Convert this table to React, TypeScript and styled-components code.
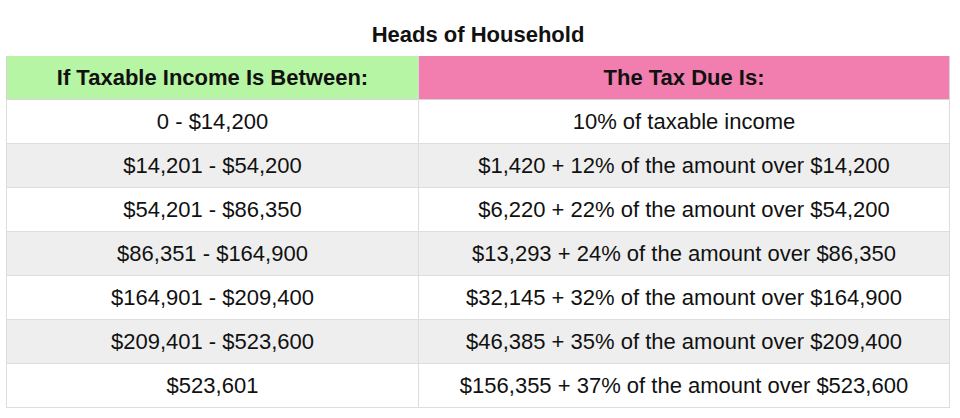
import styled, { createGlobalStyle } from "styled-components";

const rows: [string, string][] = [
  ["0 - $14,200", "10% of taxable income"],
  ["$14,201 - $54,200", "$1,420 + 12% of the amount over $14,200"],
  ["$54,201 - $86,350", "$6,220 + 22% of the amount over $54,200"],
  ["$86,351 - $164,900", "$13,293 + 24% of the amount over $86,350"],
  ["$164,901 - $209,400", "$32,145 + 32% of the amount over $164,900"],
  ["$209,401 - $523,600", "$46,385 + 35% of the amount over $209,400"],
  ["$523,601", "$156,355 + 37% of the amount over $523,600"],
];

export default function App() {
  return (
    <>
      <GlobalStyle />
      <Page>
        <Title>Heads of Household</Title>
        <Table>
          <thead>
            <tr>
              <HeadCell $bg="#b6f5a3">If Taxable Income Is Between:</HeadCell>
              <HeadCell $bg="#f17eae">The Tax Due Is:</HeadCell>
            </tr>
          </thead>
          <tbody>
            {rows.map(([range, due], i) => (
              <Row key={range} $striped={i % 2 === 1}>
                <Cell>{range}</Cell>
                <Cell>{due}</Cell>
              </Row>
            ))}
          </tbody>
        </Table>
      </Page>
    </>
  );
}

const GlobalStyle = createGlobalStyle`
    body {
        margin: 0;
        background: #ffffff;
        font-family: "Liberation Sans", Arial, sans-serif;
        color: #111111;
    }
`;

const Page = styled.div`
    width: 960px;
    height: 418px;
    padding: 0 10px 0 6px;
    box-sizing: border-box;
`;

const Title = styled.h1`
    margin: 0;
    height: 56px;
    display: flex;
    align-items: center;
    justify-content: center;
    padding-top: 14px;
    box-sizing: border-box;
    font-size: 22px;
    font-weight: 700;
`;

const Table = styled.table`
    width: 944px;
    border-collapse: collapse;
    table-layout: fixed;
    font-size: 22px;

    th:first-child,
    td:first-child {
        width: 411px;
    }
`;

const HeadCell = styled.th<{ $bg: string }>`
    height: 43px;
    padding: 0;
    background: ${(p) => p.$bg};
    font-weight: 700;
    text-align: center;
    border: 1px solid #d6d6d6;
    border-top: none;
`;

const Row = styled.tr<{ $striped: boolean }>`
    background: ${(p) => (p.$striped ? "#eeeeee" : "#ffffff")};
`;

const Cell = styled.td`
    height: 43px;
    padding: 0;
    text-align: center;
    border: 1px solid #dddddd;
`;
